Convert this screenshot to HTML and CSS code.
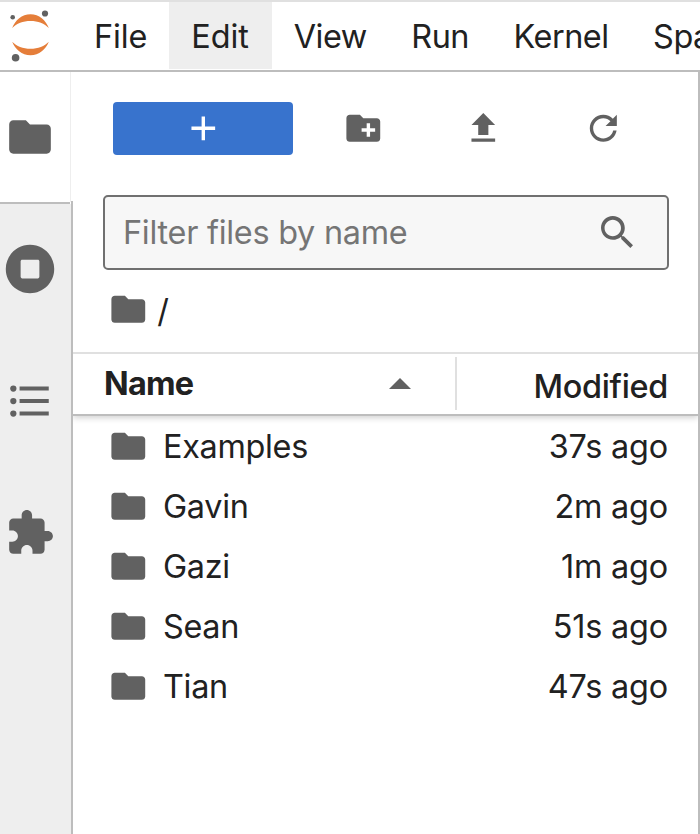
FILE: index.html
```html
<!DOCTYPE html>
<html lang="en">
<head>
<meta charset="utf-8">
<title>JupyterLab</title>
<link rel="stylesheet" href="styles.css">
</head>
<body>
<svg class="defs" aria-hidden="true">
  <symbol id="folder" viewBox="0 0 24 24"><path d="M10 4H4c-1.1 0-1.99.9-1.99 2L2 18c0 1.1.9 2 2 2h16c1.1 0 2-.9 2-2V8c0-1.1-.9-2-2-2h-8l-2-2z"/></symbol>
</svg>
<header class="menubar">
  <svg class="logo" viewBox="0 0 60 68">
    <g fill="#e57e3a"><path d="M12.2 26C15 18.5 22 12.3 30.5 12.3S46 18.5 48.8 26C44.5 21.5 38 19 30.5 19S16.500 21.500 12.200 26z"/><path d="M12.2 39.700C15 47.200 22 53.300 30.500 53.300S46 47.200 48.800 39.700C44.500 44.200 38 46.800 30.500 46.800S16.500 44.200 12.200 39.700z"/></g>
    <g fill="#616161"><circle cx="12.700" cy="15.300" r="2.300"/><circle cx="45" cy="11.500" r="3.100"/><circle cx="15.600" cy="55.700" r="3.800"/></g>
  </svg>
  <nav class="menu">
    <span class="item">File</span><span class="item active">Edit</span><span class="item">View</span><span class="item">Run</span><span class="item">Kernel</span><span class="item">Spaces</span>
  </nav>
</header>
<div class="body">
  <aside class="sidebar">
    <div class="tab current"><svg viewBox="0 0 24 24"><use href="#folder"/></svg></div>
    <div class="tabs">
      <div class="tab"><svg viewBox="0 0 512 512"><path d="M256 8C119 8 8 119 8 256s111 248 248 248 248-111 248-248S393 8 256 8zm96 328c0 8.800-7.200 16-16 16H176c-8.800 0-16-7.200-16-16V176c0-8.800 7.200-16 16-16h160c8.800 0 16 7.200 16 16v160z"/></svg></div>
      <div class="tab"><svg viewBox="0 0 24 24"><path d="M7 5h14v2H7zM7 11h14v2H7zM7 17h14v2H7z"/><circle cx="4" cy="6" r="1.500"/><circle cx="4" cy="12" r="1.500"/><circle cx="4" cy="18" r="1.500"/></svg></div>
      <div class="tab"><svg viewBox="0 0 24 24"><path d="M20.500 11H19V7c0-1.100-.9-2-2-2h-4V3.500C13 2.120 11.880 1 10.500 1S8 2.120 8 3.500V5H4c-1.100 0-1.990.9-1.990 2v3.800H3.500c1.490 0 2.700 1.210 2.700 2.700s-1.210 2.700-2.700 2.700H2V20c0 1.100.9 2 2 2h3.800v-1.500c0-1.490 1.210-2.700 2.700-2.700 1.490 0 2.700 1.210 2.700 2.700V22H17c1.100 0 2-.9 2-2v-4h1.500c1.380 0 2.500-1.120 2.500-2.500S21.880 11 20.500 11z"/></svg></div>
    </div>
  </aside>
  <main class="browser">
    <div class="toolbar">
      <div class="new"><svg class="icon" viewBox="0 0 24 24"><path d="M19 13h-6v6h-2v-6H5v-2h6V5h2v6h6v2z"/></svg></div>
      <svg class="icon" viewBox="0 0 24 24"><path d="M20 6h-8l-2-2H4c-1.110 0-1.990.89-1.990 2L2 18c0 1.110.89 2 2 2h16c1.110 0 2-.89 2-2V8c0-1.110-.89-2-2-2zm-1 8h-3v3h-2v-3h-3v-2h3V9h2v3h3v2z"/></svg>
      <svg class="icon" viewBox="0 0 24 24"><path d="M5 20h14v-2H5v2zM5 10h4v6h6v-6h4l-7-7-7 7z"/></svg>
      <svg class="icon" viewBox="0 0 18 18"><path d="M9 13.500c-2.490 0-4.500-2.010-4.500-4.500S6.510 4.500 9 4.500c1.240 0 2.360.52 3.170 1.330L10 8h5V3l-1.760 1.760C12.150 3.680 10.660 3 9 3 5.690 3 3.010 5.690 3.010 9S5.690 15 9 15c2.970 0 5.430-2.160 5.900-5h-1.520c-.46 2-2.240 3.500-4.380 3.500z"/></svg>
    </div>
    <div class="filter"><span>Filter files by name</span>
      <svg viewBox="0 0 18 18"><path d="M12.100,10.900h-0.700l-0.200-0.200c0.800-0.900,1.300-2.200,1.300-3.500c0-3-2.400-5.400-5.400-5.400S1.800,4.200,1.800,7.100s2.400,5.400,5.400,5.400c1.300,0,2.500-0.500,3.500-1.300l0.200,0.200v0.700l4.100,4.100l1.200-1.200L12.100,10.900z M7.100,10.900c-2.100,0-3.700-1.700-3.700-3.700s1.700-3.700,3.700-3.700s3.700,1.700,3.700,3.700S9.200,10.900,7.100,10.900z"/></svg>
    </div>
    <div class="crumbs"><svg class="icon"><use href="#folder"/></svg><span>/</span></div>
    <div class="head">
      <div class="name">Name<svg viewBox="0 0 22 11"><path d="M0 11 11 0l11 11z"/></svg></div>
      <div class="modified">Modified</div>
    </div>
    <div class="list">
      <div class="row"><svg class="icon"><use href="#folder"/></svg><span>Examples</span><time>37s ago</time></div>
      <div class="row"><svg class="icon"><use href="#folder"/></svg><span>Gavin</span><time>2m ago</time></div>
      <div class="row"><svg class="icon"><use href="#folder"/></svg><span>Gazi</span><time>1m ago</time></div>
      <div class="row"><svg class="icon"><use href="#folder"/></svg><span>Sean</span><time>51s ago</time></div>
      <div class="row"><svg class="icon"><use href="#folder"/></svg><span>Tian</span><time>47s ago</time></div>
    </div>
  </main>
</div>
</body>
</html>
```
FILE: styles.css
```css
* { box-sizing: border-box; }
body {
  margin: 0;
  width: 700px;
  height: 834px;
  display: flex;
  flex-direction: column;
  overflow: hidden;
  background: #fff;
  color: #212121;
  font: 32.4px/40px Inter, "Liberation Sans", sans-serif;
  letter-spacing: -.3px;
}
svg { display: block; flex: none; fill: #616161; }
.defs { display: none; }
.icon { width: 40.6px; height: 40.6px; }

.menubar {
  display: flex;
  height: 72px;
  flex: none;
  border-top: 2px solid #e0e0e0;
  border-bottom: 2px solid #bdbdbd;
}
.logo { width: 60px; height: 68px; margin-right: 12px; }
.menu { display: flex; flex: 1; min-width: 0; height: 67px; overflow: hidden; letter-spacing: -.45px; }
.item { padding: 15px 22.4px 0 22px; white-space: nowrap; }
.item:first-child { padding-right: 22px; letter-spacing: -.1px; }
.item.active { padding-right: 23px; letter-spacing: -.1px; background: #eee; }

.body { display: flex; flex: 1; min-height: 0; }
.sidebar { width: 71px; flex: none; display: flex; flex-direction: column; }
.tab {
  height: 132px;
  width: 60px;
  flex: none;
  display: flex;
  align-items: center;
  justify-content: center;
}
.tab svg { width: 50px; height: 50px; }
.current { height: 130px; width: 71px; padding-right: 10px; border-right: 1px solid #eee; }
.tabs { flex: 1; margin-right: 1px; background: #eee; border-top: 2px solid #bdbdbd; box-shadow: 1px 2px #eee; }
.tabs .tab:first-child { height: 131px; padding-bottom: 1px; }

.browser {
  flex: 1;
  min-width: 0;
  display: flex;
  flex-direction: column;
  border-left: 2px solid;
  border-image: linear-gradient(to bottom, transparent 130px, #bdbdbd 130px) 2;
  border-image-width: 0 0 0 2px;
  box-shadow: inset -2px 0 #bdbdbd;
}
.toolbar {
  display: grid;
  grid-template-columns: 180px 140px 100px 140px;
  justify-items: center;
  align-items: center;
  height: 53px;
  margin: 30px 0 0 40px;
}
.toolbar .icon { margin-bottom: 1px; }
.new {
  width: 180px;
  height: 53px;
  display: flex;
  align-items: center;
  justify-content: center;
  border-radius: 4px;
  background: #3873cd;
}
.new svg { fill: #fff; }
.filter {
  display: flex;
  align-items: center;
  justify-content: space-between;
  height: 75px;
  margin: 40px 31px 0 30px;
  padding: 0 30px 0 18px;
  border: 2px solid #707070;
  border-radius: 5px;
  background: #f7f7f7;
  color: #757575;
  letter-spacing: -.26px;
}
.filter svg { width: 40px; height: 40px; margin-bottom: 1px; }
.crumbs { display: flex; align-items: center; height: 78px; margin: 0 0 4px 34.6px; }
.crumbs span { padding: 5px 0 0 9px; }
.head {
  display: flex;
  height: 64px;
  flex: none;
  margin-right: 2px;
  border-top: 2px solid #e0e0e0;
  border-bottom: 2px solid #bdbdbd;
  box-shadow: 0 2px 6px rgba(0, 0, 0, .18);
  clip-path: inset(0 0 -10px 0);
}
.name {
  display: flex;
  align-items: center;
  justify-content: space-between;
  width: 384px;
  height: 53px;
  margin-top: 3px;
  padding: 0 44px 0 31px;
  border-right: 2px solid #e0e0e0;
  font-weight: 700;
  letter-spacing: -.8px;
}
.name svg { width: 22px; height: 11px; }
.modified { flex: 1; padding: 13px 30px 0 0; text-align: right; font-weight: 500; }
.list { padding-top: 1px; }
.row { display: flex; align-items: center; height: 60px; padding: 0 32px 0 34.6px; }
.row .icon { margin-bottom: 2px; }
.row span { flex: 1; padding-left: 14.8px; }
.row time { letter-spacing: -.2px; }
```
